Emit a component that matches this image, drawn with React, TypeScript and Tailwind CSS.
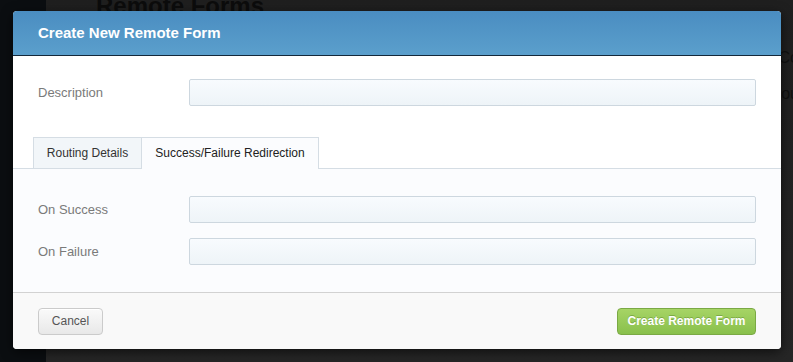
import React from 'react'

const font = { fontFamily: '"Liberation Sans", Arial, Helvetica, sans-serif' }

function Field({ label }: { label: string }) {
  return (
    <div className="flex items-center">
      <label className="w-[151px] shrink-0 text-[13px] text-[#7a7a7a]">{label}</label>
      <input
        type="text"
        className="h-[27px] flex-1 rounded-[2px] border border-[#cdd7df] bg-gradient-to-b from-[#f8fbfe] to-[#eef4f8] px-2 text-[13px] outline-none"
      />
    </div>
  )
}

export default function App() {
  return (
    <div className="relative h-[362px] w-[793px] overflow-hidden bg-[#232323]" style={font}>
      {/* page behind the overlay */}
      <div className="flex h-full">
        <div className="w-[46px] shrink-0 bg-[#0b0e11]" />
        <div className="flex-1 bg-gradient-to-b from-[#1f1f1f] to-[#262626]">
          <div className="-mt-[12px] pl-[50px] text-[24px] font-bold text-[#0c0c0c]">Remote Forms</div>
          <div className="mt-[22px] flex flex-col items-end gap-[12px] text-[16px] text-[#101010]">
            <span className="-mr-[6px]">Co</span>
            <span className="-mr-[6px]">ou</span>
          </div>
        </div>
      </div>

      {/* modal */}
      <div className="absolute left-[13px] top-[11px] flex h-[338px] w-[768px] flex-col overflow-hidden rounded-[4px] bg-white shadow-[0_3px_12px_rgba(0,0,0,0.6)]">
        <div className="flex h-[45px] shrink-0 items-center border-b border-[#14283a] bg-gradient-to-b from-[#4a8dc1] to-[#5b9fcc] pl-[25px]">
          <h3 className="text-[15px] font-bold text-white">Create New Remote Form</h3>
        </div>

        <div className="px-[25px] pt-[23px]">
          <Field label="Description" />
        </div>

        <div className="mt-[32px] flex h-[31px] shrink-0 items-end border-b border-[#d5dde4] pl-[20px]">
          <div className="flex h-[31px] w-[109px] items-center justify-center border border-b-0 border-[#d5dde4] bg-[#f2f6f9] text-[12px] text-[#333]">
            Routing Details
          </div>
          <div className="-mb-px flex h-[32px] w-[177px] items-center justify-center border border-b-0 border-l-0 border-[#d5dde4] bg-[#fbfcfe] pb-px text-[12px] text-[#222]">
            Success/Failure Redirection
          </div>
        </div>

        <div className="flex flex-1 flex-col gap-[15px] bg-[#fbfcfe] px-[25px] pt-[27px]">
          <Field label="On Success" />
          <Field label="On Failure" />
        </div>

        <div className="flex h-[57px] shrink-0 items-center justify-between border-t border-[#d2d2d2] bg-[#f9f9f9] px-[25px]">
          <button className="h-[27px] w-[65px] rounded-[4px] border border-[#cbcbcb] bg-gradient-to-b from-[#fafafa] to-[#e8e8e8] text-[12px] text-[#555] shadow-[inset_0_1px_0_#fff]">
            Cancel
          </button>
          <button className="h-[27px] w-[139px] rounded-[4px] border border-[#7aa944] bg-gradient-to-b from-[#a6d465] to-[#89c04c] text-[12px] font-bold text-white [text-shadow:0_-1px_0_rgba(60,100,20,0.35)]">
            Create Remote Form
          </button>
        </div>
      </div>
    </div>
  )
}
